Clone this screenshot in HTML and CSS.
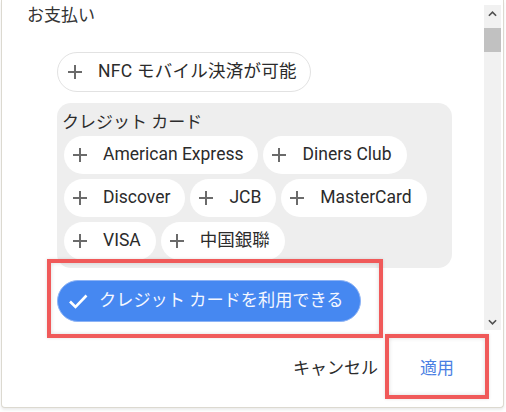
FILE: index.html
```html
<!DOCTYPE html>
<html lang="ja">
<head>
<meta charset="utf-8">
<title>お支払い</title>
<link rel="stylesheet" href="styles.css">
</head>
<body>
<div class="page">
  <div class="dialog">
    <div class="body">
      <div class="scroll">
        <div class="title">お支払い</div>
        <div class="section">
          <div class="chip chip-outline">
            <svg class="plus" viewBox="0 0 14 14"><path d="M7 0v14M0 7h14"/></svg>
            <span>NFC モバイル決済が可能</span>
          </div>
          <div class="group">
            <div class="group-label">クレジット カード</div>
            <div class="chips">
              <div class="chip"><svg class="plus" viewBox="0 0 14 14"><path d="M7 0v14M0 7h14"/></svg><span>American Express</span></div>
              <div class="chip"><svg class="plus" viewBox="0 0 14 14"><path d="M7 0v14M0 7h14"/></svg><span>Diners Club</span></div>
              <div class="chip"><svg class="plus" viewBox="0 0 14 14"><path d="M7 0v14M0 7h14"/></svg><span>Discover</span></div>
              <div class="chip"><svg class="plus" viewBox="0 0 14 14"><path d="M7 0v14M0 7h14"/></svg><span>JCB</span></div>
              <div class="chip"><svg class="plus" viewBox="0 0 14 14"><path d="M7 0v14M0 7h14"/></svg><span>MasterCard</span></div>
              <div class="chip"><svg class="plus" viewBox="0 0 14 14"><path d="M7 0v14M0 7h14"/></svg><span>VISA</span></div>
              <div class="chip"><svg class="plus" viewBox="0 0 14 14"><path d="M7 0v14M0 7h14"/></svg><span>中国銀聯</span></div>
            </div>
          </div>
          <div class="chip chip-selected">
            <svg class="check" viewBox="0 0 20 20"><path d="M2 10.5l5.5 5.5L18.5 4.5"/></svg>
            <span>クレジット カードを利用できる</span>
          </div>
        </div>
      </div>
      <div class="scrollbar">
        <div class="sb-btn"><svg viewBox="0 0 10 6"><path d="M1 5l4-4 4 4"/></svg></div>
        <div class="sb-thumb"></div>
        <div class="sb-track"></div>
        <div class="sb-btn"><svg viewBox="0 0 10 6"><path d="M1 1l4 4 4-4"/></svg></div>
      </div>
    </div>
    <div class="footer">
      <button class="btn">キャンセル</button>
      <button class="btn btn-primary">適用</button>
    </div>
  </div>
  <div class="mark mark-chip"></div>
  <div class="mark mark-apply"></div>
</div>
</body>
</html>
```
FILE: styles.css
```css
* { box-sizing: border-box; }
html, body { margin: 0; padding: 0; background: #fff; }
body {
  font-family: "Roboto", "Noto Sans CJK JP", sans-serif;
  font-size: 17px;
  color: #2b2b2b;
}
.page {
  position: relative;
  width: 506px;
  height: 412px;
  overflow: hidden;
}
.dialog {
  margin-left: 1px;
  width: 503px;
  height: 408px;
  border: 1px solid #dcd9d0;
  border-top: none;
  border-radius: 0 0 4px 4px;
  box-shadow: 0 2px 3px rgba(0,0,0,0.08);
  display: flex;
  flex-direction: column;
  background: #fff;
}
.body {
  display: flex;
  height: 330px;
}
.scroll {
  flex: 1;
  overflow: hidden;
  padding: 3px 0 0 25px;
}
.title {
  line-height: 24px;
  color: #333;
}
.section {
  margin-left: 30px;
  margin-top: 25px;
}
.chip {
  display: inline-flex;
  align-items: center;
  height: 38px;
  padding: 0 15px 0 9px;
  border-radius: 19px;
  background: #fff;
  white-space: nowrap;
  line-height: 1;
  font-size: 17.5px;
}
.chip .plus {
  width: 14px;
  height: 14px;
  margin-right: 16px;
  flex: none;
}
.plus path {
  stroke: #6b6b6b;
  stroke-width: 2;
  fill: none;
}
.chip-outline {
  height: 40px;
  border: 1px solid #e2e2e2;
  border-radius: 20px;
  padding: 0 13px 0 10px;
  letter-spacing: 0.25px;
}
.group {
  margin-top: 11px;
  width: 395px;
  background: #eeeeee;
  border-radius: 14px;
  padding: 5px 7px 8px 7px;
}
.group-label {
  line-height: 28px;
  margin-left: -2px;
}
.chips {
  display: flex;
  flex-wrap: wrap;
  gap: 5px 5px;
}
.chip-selected {
  margin-top: 12px;
  height: 42px;
  border-radius: 21px;
  background: #4688f1;
  border: 1px solid #8db3f5;
  color: #f4f7ff;
  padding: 0 16px 0 10px;
  font-size: 17.2px;
}
.check {
  width: 20px;
  height: 20px;
  margin-right: 11px;
  flex: none;
}
.check path {
  stroke: #fff;
  stroke-width: 2.6;
  fill: none;
}
.scrollbar {
  width: 17px;
  margin: 5px 2px 0 0;
  background: #f1f1f1;
  display: flex;
  flex-direction: column;
}
.sb-btn {
  height: 17px;
  display: flex;
  align-items: center;
  justify-content: center;
}
.sb-btn svg {
  width: 9px;
  height: 6px;
}
.sb-btn path {
  stroke: #505050;
  stroke-width: 1.8;
  fill: none;
}
.sb-thumb {
  height: 24px;
  margin: 6px 0 0 0;
  background: #c1c1c1;
}
.sb-track { flex: 1; }
.footer {
  flex: 1;
  display: flex;
  justify-content: flex-end;
  align-items: center;
  gap: 10px;
  padding: 0 33px 4px 0;
}
.btn {
  font: inherit;
  font-size: 17px;
  background: none;
  border: none;
  padding: 0 16px;
  height: 40px;
  color: #2b2b2b;
}
.btn-primary { color: #4a7fe3; }
.mark {
  position: absolute;
  border: 4px solid #f05a5a;
  box-shadow: inset 0 0 4px rgba(0,0,0,0.15), 0 0 3px rgba(0,0,0,0.12);
}
.mark-chip { left: 47px; top: 259px; width: 336px; height: 79px; }
.mark-apply { left: 385px; top: 334px; width: 104px; height: 65px; }
```
